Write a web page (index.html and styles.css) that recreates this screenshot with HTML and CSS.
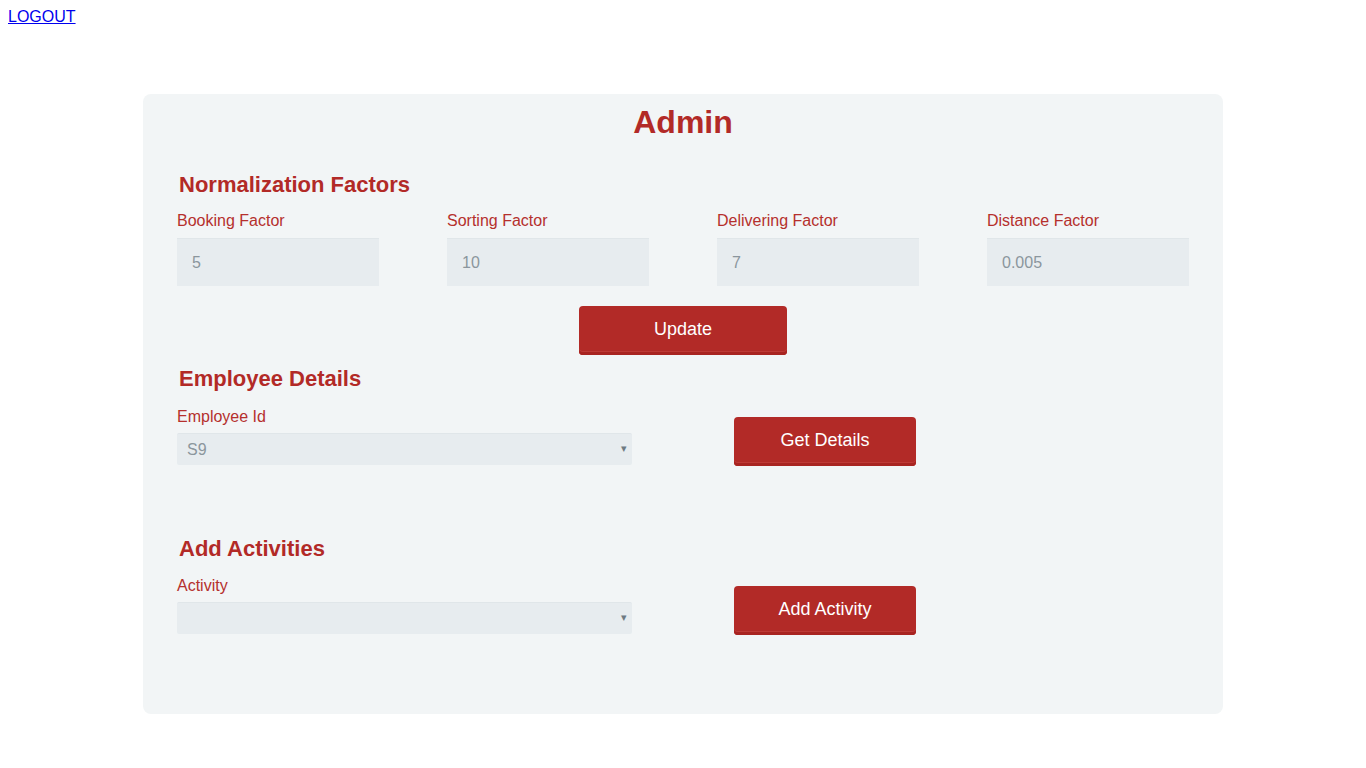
FILE: index.html
```html
<!DOCTYPE html>
<html lang="en">
<head>
<meta charset="utf-8">
<title>Admin</title>
<link rel="stylesheet" href="styles.css">
</head>
<body>
<div class="topbar"><a class="logout" href="#">LOGOUT</a></div>
<main class="card">
  <h1 class="title">Admin</h1>

  <h2 class="section-title first">Normalization Factors</h2>
  <div class="factors">
    <div class="field">
      <label class="label">Booking Factor</label>
      <input class="input" type="text" value="5">
    </div>
    <div class="field">
      <label class="label">Sorting Factor</label>
      <input class="input" type="text" value="10">
    </div>
    <div class="field">
      <label class="label">Delivering Factor</label>
      <input class="input" type="text" value="7">
    </div>
    <div class="field">
      <label class="label">Distance Factor</label>
      <input class="input" type="text" value="0.005">
    </div>
  </div>
  <button class="btn btn-update" type="button">Update</button>

  <h2 class="section-title employee">Employee Details</h2>
  <div class="row row-employee">
    <div class="field select-field">
      <label class="label label-select">Employee Id</label>
      <div class="select-wrap">
        <select class="select"><option>S9</option></select>
        <span class="caret">&#9662;</span>
      </div>
    </div>
    <button class="btn btn-side" type="button">Get Details</button>
  </div>

  <h2 class="section-title activities">Add Activities</h2>
  <div class="row row-activity">
    <div class="field select-field">
      <label class="label label-select">Activity</label>
      <div class="select-wrap">
        <select class="select"><option></option></select>
        <span class="caret">&#9662;</span>
      </div>
    </div>
    <button class="btn btn-side" type="button">Add Activity</button>
  </div>
</main>
</body>
</html>
```

FILE: styles.css
```css
body {
  margin: 8px;
  font-family: "Liberation Sans", Arial, sans-serif;
  font-size: 16px;
  background: #ffffff;
}

.topbar {
  line-height: 18px;
  height: 18px;
}

.logout {
  color: #0000ee;
  text-decoration: underline;
  font-size: 16px;
}

.card {
  width: 1080px;
  box-sizing: border-box;
  margin: 68px auto 0;
  padding: 8px 34px 80px;
  background: #f2f5f6;
  border-radius: 8px;
}

.title {
  margin: 2px 0 0;
  font-size: 32px;
  line-height: 37px;
  font-weight: bold;
  text-align: center;
  color: #b22a27;
}

.section-title {
  margin: 0;
  font-size: 22px;
  line-height: 26px;
  font-weight: bold;
  color: #b22a27;
  padding-left: 2px;
}

.section-title.first { margin-top: 31px; }
.section-title.employee { margin-top: 11px; }
.section-title.activities { margin-top: 71px; }

.factors {
  margin-top: 14px;
  display: grid;
  grid-template-columns: repeat(4, 202px);
  column-gap: 68px;
}

.field {
  display: flex;
  flex-direction: column;
}

.label {
  display: block;
  font-size: 16px;
  line-height: 18px;
  color: #b5302d;
  margin-bottom: 8px;
}

.label-select {
  margin-bottom: 7px;
}

.input {
  box-sizing: border-box;
  width: 202px;
  height: 48px;
  margin: 0;
  padding: 0 15px;
  border: none;
  border-top: 1px solid #e0e6e9;
  background: #e7ecef;
  font-family: "Liberation Sans", Arial, sans-serif;
  font-size: 16px;
  color: #8b969d;
  outline: none;
}

.btn {
  box-sizing: border-box;
  height: 49px;
  border: none;
  border-radius: 4px;
  background: #b22a27;
  box-shadow: inset 0 -3px 0 #a82421, inset 0 -4px 0 #bd3a36;
  color: #ffffff;
  font-family: "Liberation Sans", Arial, sans-serif;
  font-size: 18px;
  padding: 0 0 3px;
  cursor: pointer;
}

.btn-update {
  display: block;
  width: 208px;
  margin: 20px auto 0;
}

.row {
  display: flex;
  align-items: flex-end;
  gap: 102px;
}

.row-employee { margin-top: 16px; }
.row-activity { margin-top: 15px; }

.select-field {
  width: 455px;
}

.select-wrap {
  position: relative;
  height: 32px;
}

.select {
  appearance: none;
  -webkit-appearance: none;
  box-sizing: border-box;
  width: 455px;
  height: 32px;
  margin: 0;
  padding: 0 24px 0 10px;
  border: none;
  border-top: 1px solid #e0e6e9;
  border-radius: 2px;
  background: #e7ecef;
  font-family: "Liberation Sans", Arial, sans-serif;
  font-size: 16px;
  color: #8b969d;
  outline: none;
}

.caret {
  position: absolute;
  right: 5px;
  top: 8px;
  font-size: 11px;
  line-height: 14px;
  color: #6e7a82;
  pointer-events: none;
}

.btn-side {
  width: 182px;
  margin-bottom: -1px;
}
```
